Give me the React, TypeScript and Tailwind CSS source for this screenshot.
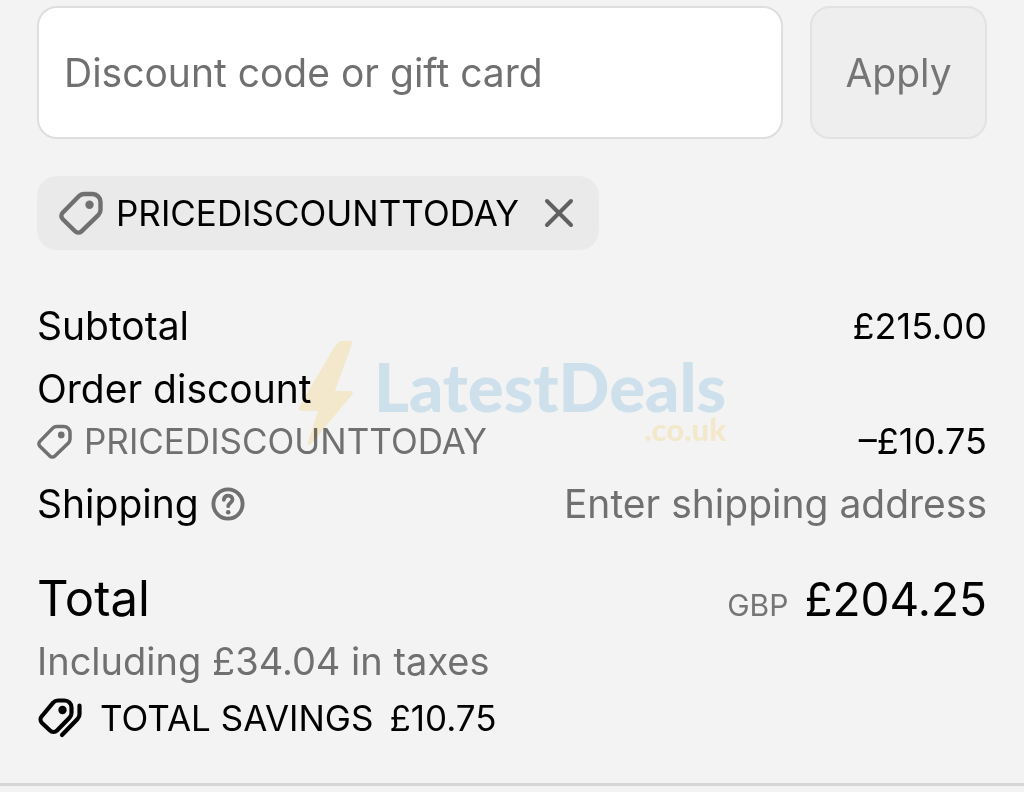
import { useState } from "react";

function TagIcon({ className }: { className: string }) {
  return (
    <svg aria-hidden="true" viewBox="0 0 44 44" fill="none" stroke="currentColor" strokeWidth="4.4" strokeLinejoin="round" className={className}>
      <path d="M25 3h8.500a8 8 0 0 1 8 8v8a7 7 0 0 1-2 4.800L22.500 40.300a4.500 4.500 0 0 1-6.400 0L3.600 28a4.500 4.500 0 0 1 0-6.200L19.800 5.200A7 7 0 0 1 25 3Z" />
      <circle cx="30.500" cy="13.700" r="4.200" fill="currentColor" stroke="none" />
    </svg>
  );
}

function SavingsIcon() {
  return (
    <svg aria-hidden="true" viewBox="0 0 46 42" fill="none" stroke="currentColor" strokeWidth="4.2" strokeLinecap="round" strokeLinejoin="round" className="h-[42px] w-[46px] shrink-0">
      <path d="M21 3.500H27.500a7 7 0 0 1 7 7V16a7 7 0 0 1-2 4.800L20 33.500a5 5 0 0 1-7 0L5 26a5 5 0 0 1 0-7L16.200 5.600A6.500 6.500 0 0 1 21 3.500Z" />
      <circle cx="25.500" cy="13" r="4.200" fill="currentColor" stroke="none" />
      <path d="M42.500 8.500V17a7 7 0 0 1-2 5L25 38" />
    </svg>
  );
}

function HelpIcon() {
  return (
    <svg aria-hidden="true" viewBox="0 0 34 34" fill="none" stroke="currentColor" strokeWidth="3.800" strokeLinecap="round" strokeLinejoin="round" className="size-[34px]">
      <circle cx="17" cy="17" r="14.600" />
      <path d="M12.800 12.800c.3-2.600 2-4.200 4.400-4.200 2.500 0 4.300 1.700 4.300 4 0 3.300-4.300 3.500-4.300 6.600" />
      <circle cx="17.200" cy="25.200" r="2.300" fill="currentColor" stroke="none" />
    </svg>
  );
}

function Watermark() {
  return (
    <div aria-hidden="true" className="pointer-events-none absolute top-[341px] left-[298px] flex mix-blend-multiply">
      <svg viewBox="0 0 56 106" fill="#fff4d6" className="h-[106px] w-[56px]">
        <path d="M41 1Q42 0 44 0H53Q55 0 54 3L37 50H53Q56 51 54 54L13 103Q9 106 10 101L20 70H3Q0 69 1 66L37 5Z" />
      </svg>
      <div className="ml-5 flex flex-col items-end pt-3 font-['Lato','Open_Sans',sans-serif] font-black">
        <span className="text-[67px] leading-[66px] text-[#d7ebf7]">LatestDeals</span>
        <span className="text-[31px] leading-[20px] text-[#fff4d6]">.co.uk</span>
      </div>
    </div>
  );
}

export default function App() {
  const [code, setCode] = useState("");
  const [applied, setApplied] = useState(true);

  return (
    <div className="min-h-screen bg-[#f3f3f3] font-['Inter','Liberation_Sans',sans-serif]">
      <main className="relative border-b-3 border-[#d6d6d6] px-[37px] pt-[6px] pb-[39px] text-[39px] leading-[52px] text-black">
        <form className="flex gap-[27px]" onSubmit={(e) => e.preventDefault()}>
          <input
            type="text"
            aria-label="Discount code or gift card"
            placeholder="Discount code or gift card"
            value={code}
            onChange={(e) => setCode(e.target.value)}
            className="h-[133px] min-w-0 flex-1 rounded-[20px] border-2 border-[#dedede] bg-white px-[25px] placeholder:text-[#707070]"
          />
          <button type="submit" className="w-[177px] rounded-[20px] border-2 border-[#e2e2e2] bg-[#eeeeee] text-[#757575]">
            Apply
          </button>
        </form>

        <div className="mt-[37px] mb-[50px] h-[74px]">
          {applied && (
            <div className="inline-flex h-[74px] items-center rounded-[20px] bg-[#eaeaea] pr-6 pl-[22px]">
              <TagIcon className="size-[44px] text-[#707070]" />
              <span className="ml-[13px] text-[35px]">PRICEDISCOUNTTODAY</span>
              <button type="button" aria-label="Remove PRICEDISCOUNTTODAY" onClick={() => setApplied(false)} className="ml-6 text-[#606060]">
                <svg aria-hidden="true" viewBox="0 0 32 32" fill="none" stroke="currentColor" strokeWidth="4" strokeLinecap="round" className="size-8">
                  <path d="M4 4l24 24M28 4L4 28" />
                </svg>
              </button>
            </div>
          )}
        </div>

        <dl>
          <div className="flex justify-between">
            <dt>Subtotal</dt>
            <dd className="text-[36px]">£215.00</dd>
          </div>
          <div className="mt-[11px] flex items-end justify-between">
            <dt>
              Order discount
              <span className="flex items-center gap-3 text-[35px] text-[#707070]">
                <TagIcon className="size-[35px]" />
                PRICEDISCOUNTTODAY
              </span>
            </dt>
            <dd className="text-[36px]">–£10.75</dd>
          </div>
          <div className="mt-[11px] flex justify-between">
            <dt className="flex items-center gap-3">
              Shipping
              <button type="button" aria-label="Shipping information" className="text-[#707070]">
                <HelpIcon />
              </button>
            </dt>
            <dd className="text-[#707070]">Enter shipping address</dd>
          </div>
          <div className="mt-[33px] flex items-baseline justify-between text-[46px] leading-[72px]">
            <dt className="text-[49px]">Total</dt>
            <dd className="flex items-baseline gap-4">
              <span className="text-[30px] leading-none text-[#757575]">GBP</span>
              £204.25
            </dd>
          </div>
        </dl>
        <p className="text-[38px] text-[#707070]">Including £34.04 in taxes</p>
        <p className="mt-[5px] flex items-center text-[35px]">
          <SavingsIcon />
          <span className="ml-[17px]">TOTAL SAVINGS</span>
          <span className="ml-4">£10.75</span>
        </p>
        <Watermark />
      </main>
    </div>
  );
}
